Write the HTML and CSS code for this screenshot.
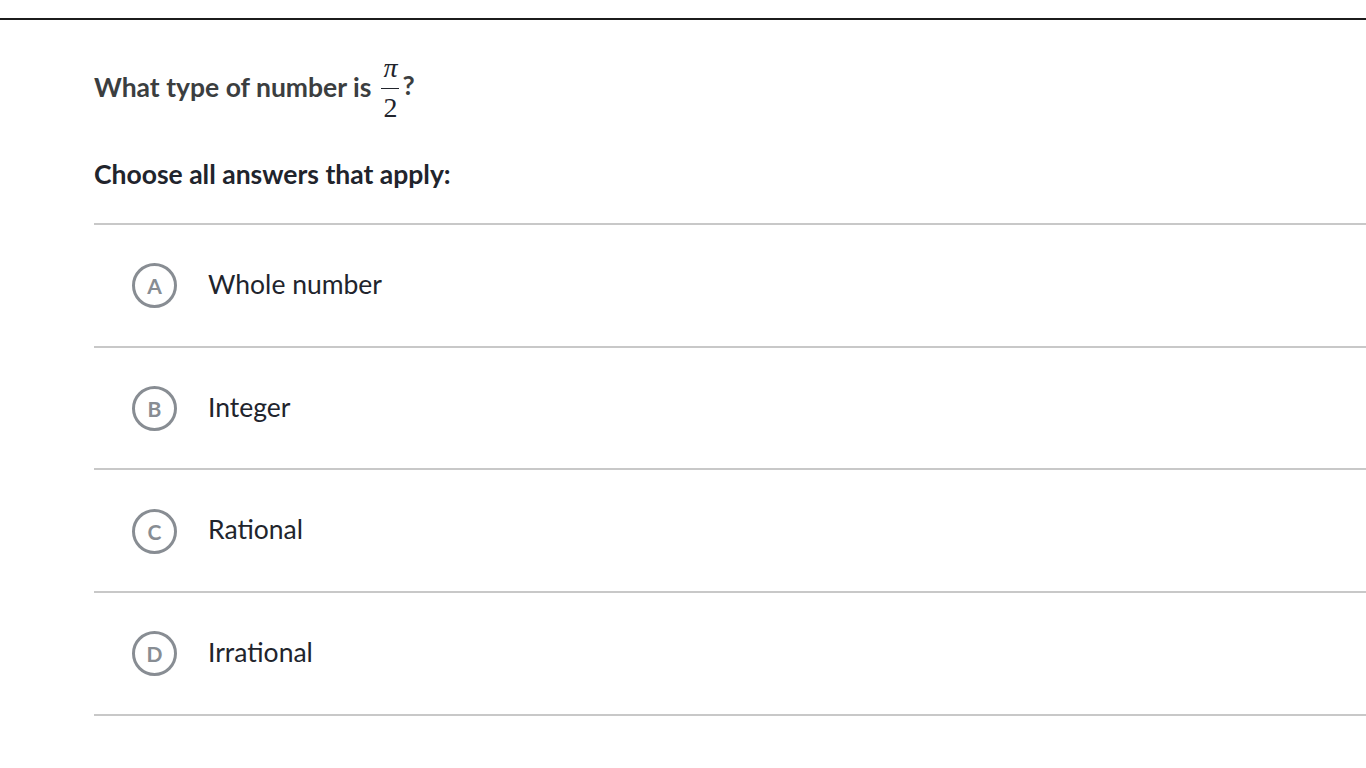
FILE: index.html
```html
<!DOCTYPE html>
<html>
<head>
<meta charset="utf-8">
<link rel="stylesheet" href="styles.css">
</head>
<body>
<div class="topbar"></div>
<main class="content">
  <div class="question">
    <span class="qtext">What type of number is</span>
    <span class="frac"><span class="num">π</span><span class="den">2</span></span><span class="qm">?</span>
  </div>
  <div class="instructions">Choose all answers that apply:</div>
  <ul class="choices">
    <li class="choice"><span class="letter">A</span><span class="label">Whole number</span></li>
    <li class="choice"><span class="letter">B</span><span class="label">Integer</span></li>
    <li class="choice"><span class="letter">C</span><span class="label">Rational</span></li>
    <li class="choice"><span class="letter">D</span><span class="label">Irrational</span></li>
  </ul>
</main>
</body>
</html>
```
FILE: styles.css
```css
html, body {
  margin: 0;
  padding: 0;
  background: #fff;
}
body {
  font-family: Lato, "Open Sans", sans-serif;
  color: #21242c;
}
.topbar {
  margin-top: 18px;
  height: 2px;
  background: #1c1c1c;
}
.content {
  padding-left: 94px;
}
.question {
  display: flex;
  align-items: center;
  margin-top: 35px;
  height: 64px;
  font-size: 26.5px;
  font-weight: 700;
  color: #3b3e40;
}
.frac {
  display: inline-flex;
  flex-direction: column;
  align-items: center;
  margin-left: 10px;
  margin-top: 2px;
  font-family: "Liberation Serif", "DejaVu Serif", serif;
  font-weight: 400;
  font-size: 28px;
  line-height: 1;
  color: #21242c;
}
.frac .num {
  font-style: italic;
  padding: 0 2px 6px;
  border-bottom: 1.5px solid #21242c;
}
.frac .den {
  padding-top: 5px;
}
.qm {
  margin-left: 3px;
  margin-top: -4px;
}
.instructions {
  margin-top: 39px;
  font-size: 26.5px;
  font-weight: 700;
  color: #21242c;
}
.choices {
  list-style: none;
  margin: 33px 0 0;
  padding: 0;
  border-top: 2px solid #c8c8c8;
}
.choice {
  display: flex;
  align-items: center;
  height: 120.7px;
  border-bottom: 2px solid #c8c8c8;
  padding-left: 38px;
}
.letter {
  box-sizing: border-box;
  width: 45px;
  height: 45px;
  border: 3px solid #888d93;
  border-radius: 50%;
  display: flex;
  align-items: center;
  justify-content: center;
  font-family: Lato, "Liberation Sans", sans-serif;
  font-weight: 700;
  font-size: 21px;
  line-height: 1;
  color: #888d93;
  margin-top: 1px;
}
.label {
  margin-left: 31px;
  margin-top: -3px;
  font-size: 26.5px;
  color: #21242c;
}
```
